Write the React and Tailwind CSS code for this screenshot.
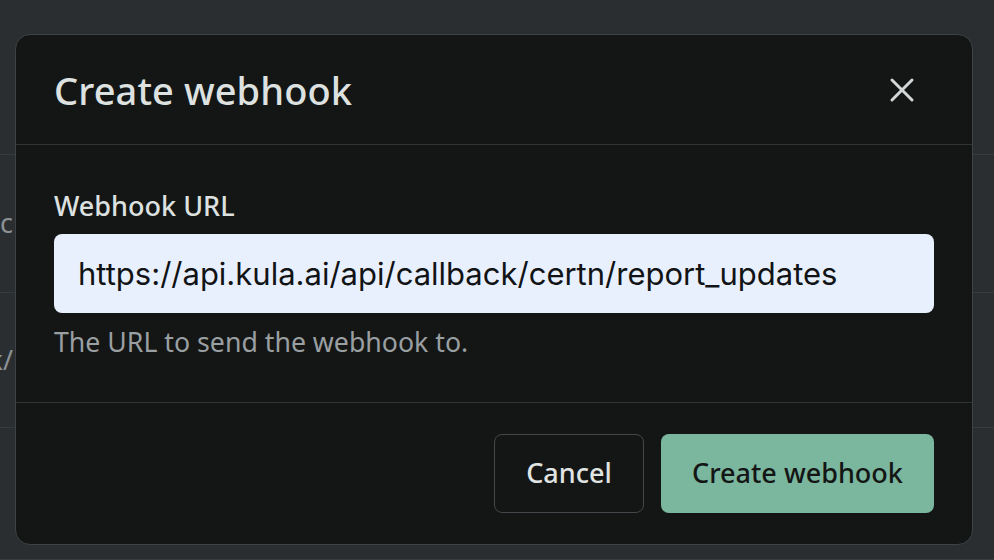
import React from "react";
import { X } from "lucide-react";

// Rows of the page behind the dialog, mostly hidden by it
const bgRows = [
  { h: "h-[155px]", text: "" },
  { h: "h-[138px]", text: "c" },
  { h: "h-[135px]", text: "k/" },
  { h: "h-[132px]", text: "" },
];

function BackgroundTable() {
  return (
    <div className="flex flex-col">
      {bgRows.map((row, i) => (
        <div
          key={i}
          className={`${row.h} flex items-center border-b border-[#363b3e]`}
        >
          <div className="w-[13px] overflow-hidden flex justify-end whitespace-nowrap text-[27px] text-[#8b9195]">
            {row.text}
          </div>
        </div>
      ))}
    </div>
  );
}

function CreateWebhookDialog() {
  return (
    <div className="absolute left-[15px] top-[34px] w-[958px] h-[511px] flex flex-col rounded-[15px] border border-[#3c4245] bg-[#141615]">
      {/* header */}
      <div className="h-[110px] shrink-0 flex items-center justify-between pl-[38px] pr-[48px] border-b border-[#2f3437]">
        <h2 className="text-[38px] font-medium text-[#dde1e0] leading-none tracking-[0.1px]">
          Create webhook
        </h2>
        <button className="w-[44px] h-[44px] flex items-center justify-center text-[#d3d7d7]">
          <X size={40} strokeWidth={1.8} />
        </button>
      </div>

      {/* body */}
      <div className="flex-1 flex flex-col px-[38px] pt-[43px]">
        <label className="text-[27px] font-medium leading-[36px] text-[#dde1e0]">
          Webhook URL
        </label>
        <input
          readOnly
          value="https://api.kula.ai/api/callback/certn/report_updates"
          className="mt-[10px] h-[79px] w-full rounded-[8px] bg-[#e8f0fe] px-[24px] text-[31px] text-[#111315] outline-none font-['Inter',sans-serif]"
        />
        <p className="mt-[11px] text-[26.7px] leading-[36px] text-[#9a9fa2]">
          The URL to send the webhook to.
        </p>
      </div>

      {/* footer */}
      <div className="h-[142px] shrink-0 flex items-center justify-end gap-[17px] px-[38px] border-t border-[#2f3437]">
        <button className="w-[150px] h-[79px] rounded-[8px] border-[1.5px] border-[#41474a] text-[27px] font-medium text-[#e0e4e3]">
          Cancel
        </button>
        <button className="w-[273px] h-[79px] rounded-[8px] bg-[#7bb79e] text-[27px] font-medium text-[#141615]">
          Create webhook
        </button>
      </div>
    </div>
  );
}

export default function App() {
  return (
    <div className="relative w-[994px] h-[560px] overflow-hidden bg-[#2a2e31] font-['Noto_Sans',sans-serif]">
      <BackgroundTable />
      <CreateWebhookDialog />
    </div>
  );
}
